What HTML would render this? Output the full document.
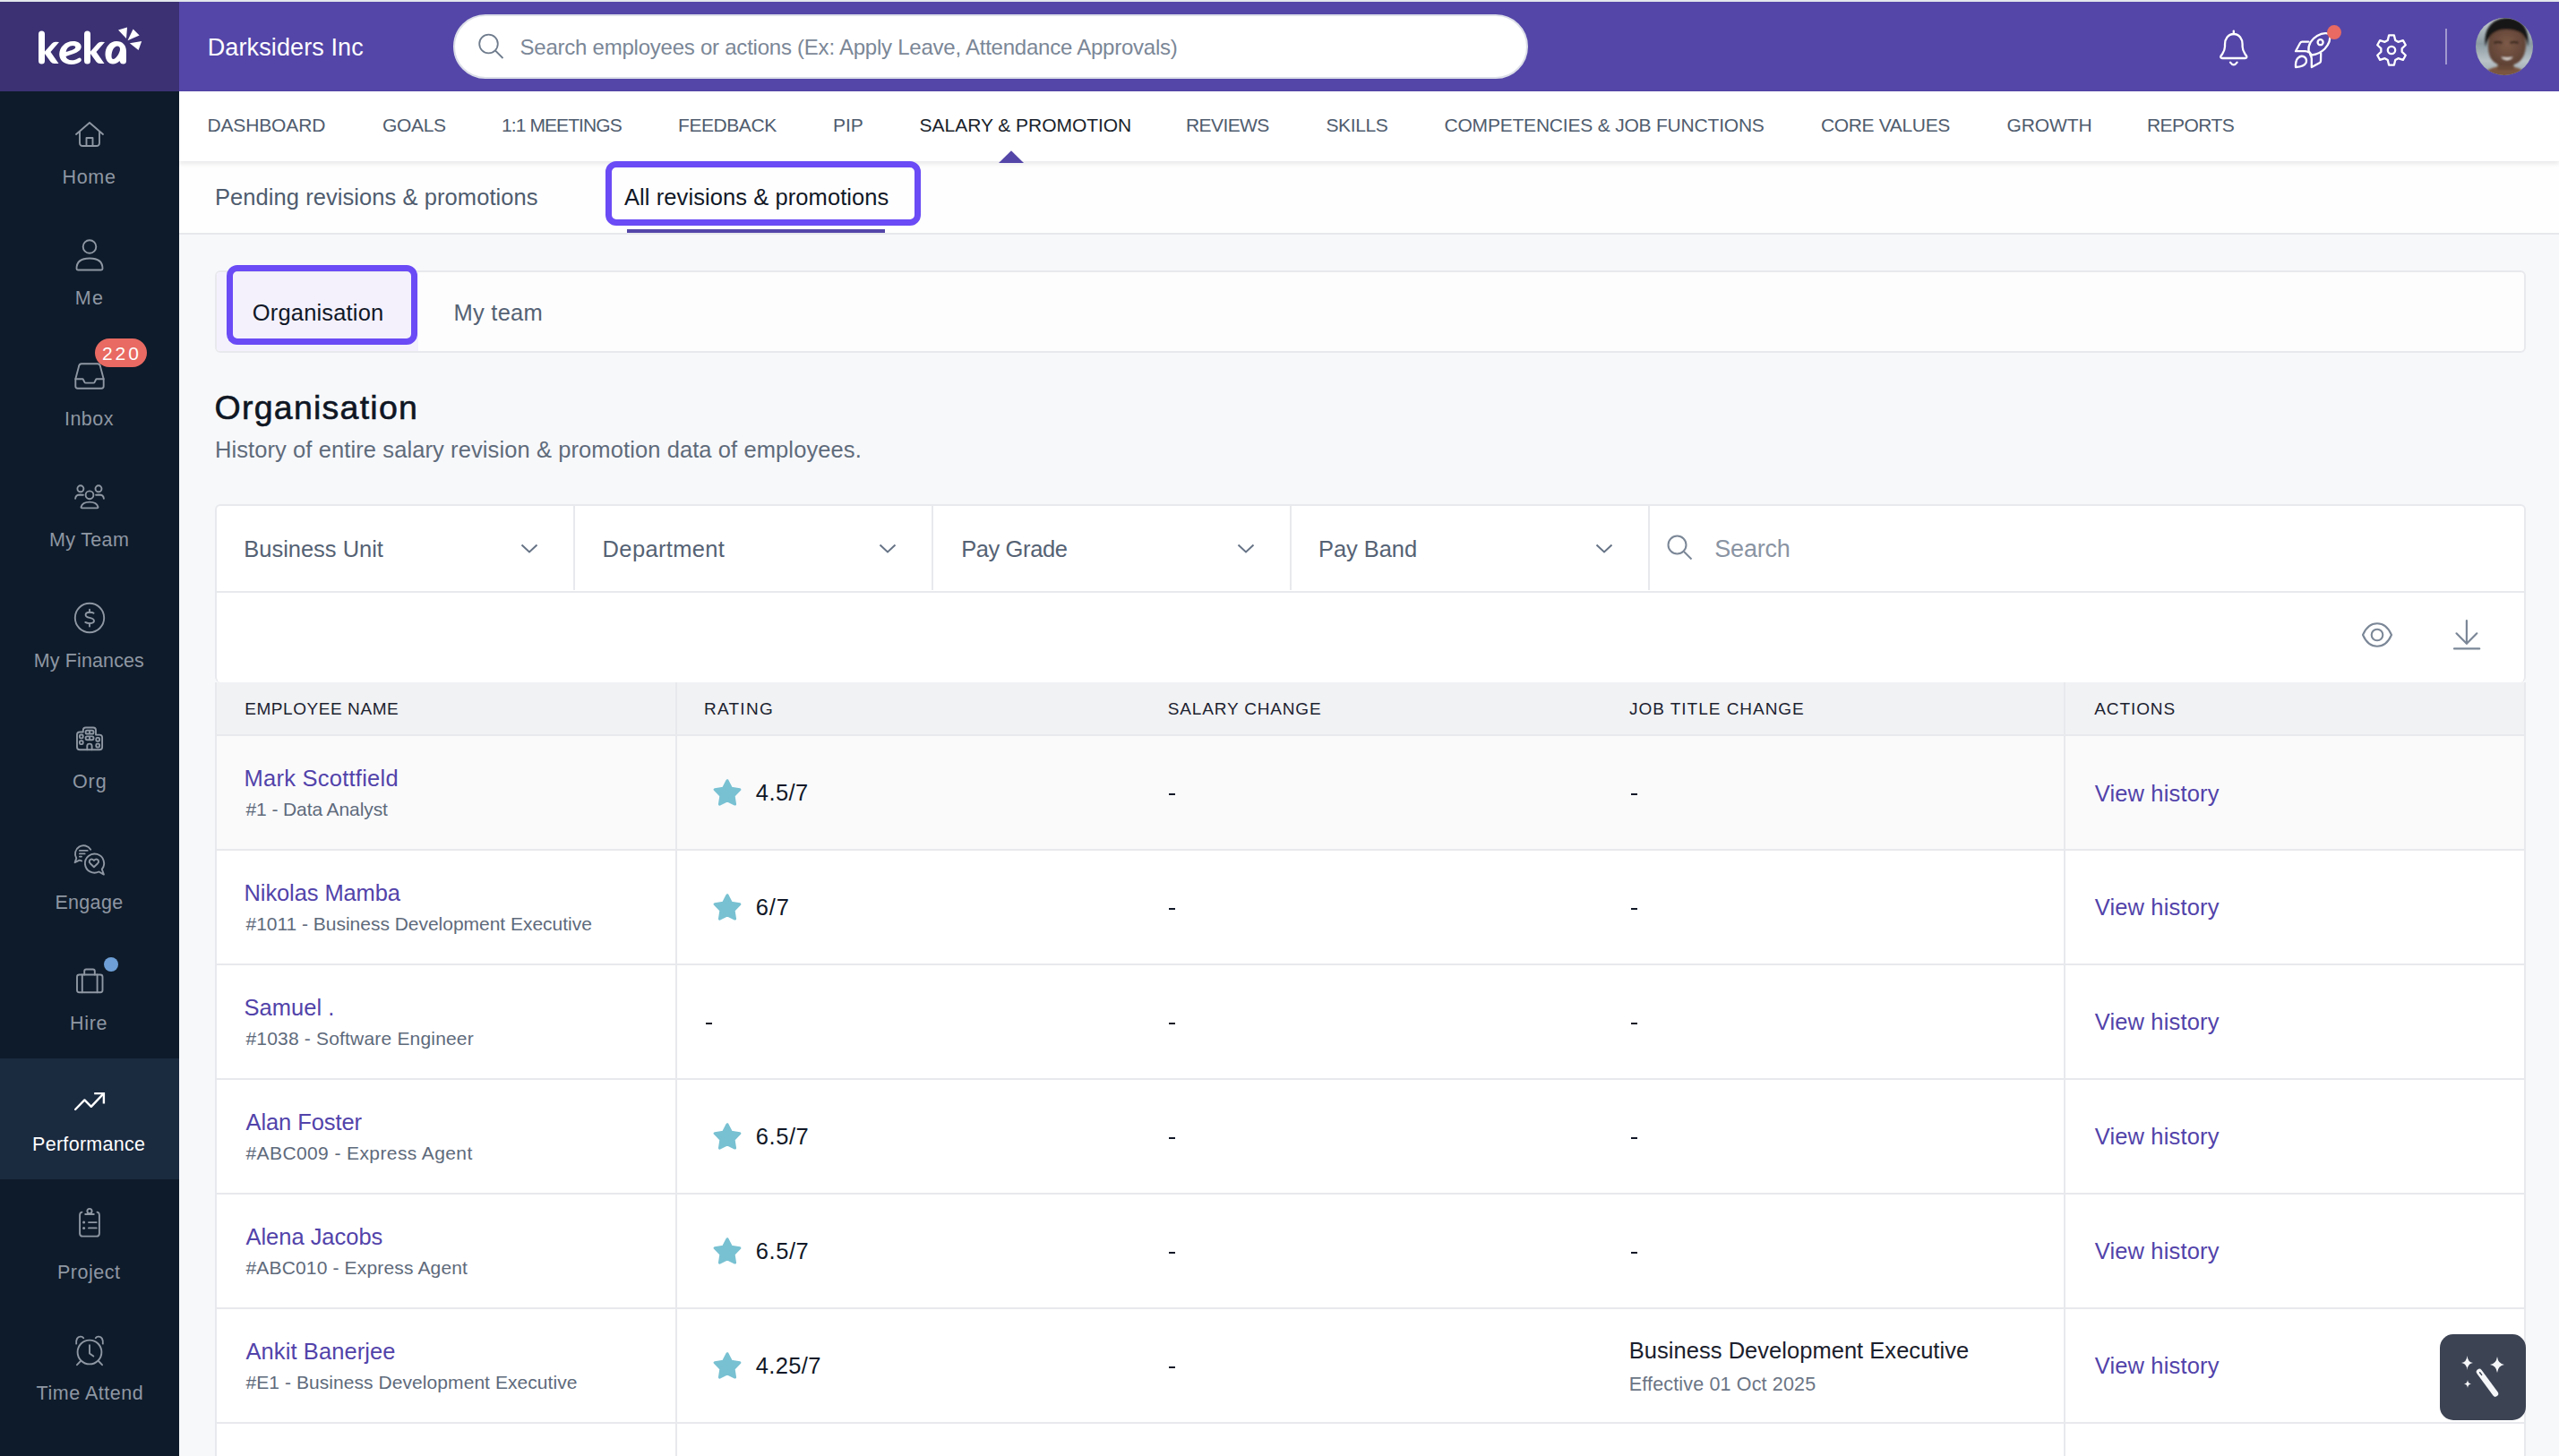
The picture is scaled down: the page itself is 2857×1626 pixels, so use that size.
<!DOCTYPE html>
<html><head><meta charset="utf-8"><title>Keka - Salary &amp; Promotion</title>
<style>
html,body{margin:0;padding:0;width:2857px;height:1626px;overflow:hidden;background:#f7f8fa}
body{position:relative;font-family:"Liberation Sans", sans-serif}
.t{position:absolute;white-space:nowrap;line-height:1;font-family:"Liberation Sans", sans-serif}
.r{position:absolute;display:block}
</style></head><body>
<div class="r" style="left:0px;top:0px;width:2857px;height:1626px;background:#f7f8fa;"></div>
<div class="r" style="left:0px;top:0px;width:2857px;height:2px;background:#e3e8ec;"></div>
<div class="r" style="left:0px;top:2px;width:200px;height:100px;background:#3b3173;"></div>
<div class="r" style="left:200px;top:2px;width:2657px;height:100px;background:#5446a8;"></div>
<div class="r" style="left:0px;top:102px;width:200px;height:1524px;background:#0e1b2a;"></div>
<div class="r" style="left:0px;top:1182px;width:200px;height:135px;background:#1a2a3f;"></div>
<svg class="r" style="left:36px;top:26px;" width="128" height="56" viewBox="0 0 128 56">
<g fill="#fff" transform="translate(0,3.5)">
<path d="M7 8.5 Q7 5 10.5 5 Q14 5 14 8.5 L14 28 L22 19 Q23.5 17.3 26 17.3 L30 17.5 L20.5 28.5 L29.5 41.5 L24.5 41.5 Q22 41.5 20.5 39.5 L14 30.5 L14 38.5 Q14 42 10.5 42 Q7 42 7 38.5 Z"/>
<g transform="translate(-1.3,0)"><path d="M47 16.5 C38 16.5 31.5 23.5 31.5 31 C31.5 37.5 36.5 42.5 45 42.5 C49.5 42.5 53 41 55.5 39 Q56.8 37.5 55.6 35.8 Q54.5 34.3 52.8 35.5 C50.5 37 48 37.8 45.5 37.8 C41.8 37.8 39.3 36 38.8 33.5 L43 32 C52 29.5 56 26.5 56 22.8 C56 19.2 52.5 16.5 47 16.5 Z M39 28.5 C39.5 24.5 42.5 21.5 46.5 21.5 C48.5 21.5 49.5 22.3 49.5 23.3 C49.5 25 46.5 26.7 39 28.5 Z"/></g>
<path d="M58 8.5 Q58 5 61.5 5 Q65 5 65 8.5 L65 28 L73 19 Q74.5 17.3 77 17.3 L81 17.5 L71.5 28.5 L80.5 41.5 L75.5 41.5 Q73 41.5 71.5 39.5 L65 30.5 L65 38.5 Q65 42 61.5 42 Q58 42 58 38.5 Z"/>
<path d="M94 16.5 C86.5 16.5 81.5 23.5 81.5 31 C81.5 37.5 85 42 90 42 C93 42 95.5 40.5 97.5 38.5 L97.8 39.5 Q98.5 42 101.5 42 Q105 42 105 38.5 L105 28 C105 21 101 16.5 94 16.5 Z M88.5 33.5 C88.5 27 91.5 22 95 22 C97 22 98 23.5 98 25.5 C98 30 93 36.5 90.5 36.5 C89 36.5 88.5 35 88.5 33.5 Z"/>
</g>
<g fill="#fff">
<path d="M96 7.5 L106 4.5 L105 17 Z"/>
<path d="M106.5 19.3 L112.6 6.4 L119.6 13.6 Z"/>
<path d="M108.8 22.2 L122.2 20 L118.6 30 Z"/>
</g></svg>
<div class="t" style="left:231.70px;top:40.00px;font-size:27px;color:#ffffff;font-weight:400;letter-spacing:0.115px;">Darksiders Inc</div>
<div class="r" style="left:506px;top:16px;width:1200px;height:72px;background:#ffffff;border-radius:36px;box-sizing:border-box;border:2px solid #dcdfe8;"></div>
<svg class="r" style="left:530px;top:34px;" width="36" height="36" viewBox="0 0 36 36"><circle cx="15.5" cy="15" r="10.3" fill="none" stroke="#6f7c8d" stroke-width="1.8"/><line x1="23" y1="22.5" x2="31.5" y2="31" stroke="#6f7c8d" stroke-width="1.8"/></svg>
<div class="t" style="left:580.50px;top:41.00px;font-size:24px;color:#7b8797;font-weight:400;letter-spacing:-0.235px;">Search employees or actions (Ex: Apply Leave, Attendance Approvals)</div>
<svg class="r" style="left:2465px;top:25px;" width="60" height="60" viewBox="0 0 60 60"><g fill="none" stroke="#fff" stroke-width="2.3" stroke-linejoin="round" stroke-linecap="round">
<path d="M28.8 13 C22.5 13 19 18.5 19 24.5 L19 27 C19 30.5 18 32.5 16 35.5 L14.5 37.5 Q13.5 39.8 16 40 L41.6 40 Q44.1 39.8 43.1 37.5 L41.6 35.5 C39.6 32.5 38.6 30.5 38.6 27 L38.6 24.5 C38.6 18.5 35.1 13 28.8 13 Z"/>
<path d="M28.8 9.6 L28.8 13"/>
<path d="M25 44.6 Q28.8 50 32.6 44.6"/></g></svg>
<svg class="r" style="left:2550px;top:25px;" width="70" height="60" viewBox="0 0 70 60"><g fill="none" stroke="#fff" stroke-width="2.3" stroke-linejoin="round" stroke-linecap="round">
<path d="M27.5 32 C26.5 25 31 18.5 37 15 C42 12 47.5 11.8 50.8 13 C52 17.5 50.5 24 45.5 29.5 C41.5 33.5 36 35.8 31 36.5 C29.5 35 28.5 33.5 27.5 32 Z"/>
<circle cx="40.6" cy="22.2" r="3"/>
<path d="M27.3 21.6 L20.3 21.6 Q18.8 21.6 18 23 L13 32.2 L23.5 32.2 Q26 32.4 27.6 33.4"/>
<path d="M41.2 34.6 L41 43 Q41 44.6 39.6 45.3 L30.8 50 L30.8 40.5 Q30.6 37.8 29.2 35.8"/>
<path d="M13 50 Q12.6 43 15.5 39.8 Q19 36.5 22.6 38.5 Q26 41 24.6 45 Q22.5 49.5 13 50 Z"/>
</g>
<circle cx="56" cy="11.1" r="8" fill="#e86a62"/></svg>
<svg class="r" style="left:2640px;top:25px;" width="60" height="60" viewBox="0 0 60 60"><g fill="none" stroke="#fff" stroke-width="2.3" stroke-linejoin="round">
<path d="M25.77 19.98 L27.08 14.46 L32.92 14.46 L34.23 19.98 L37.43 21.83 L42.87 20.20 L45.79 25.25 L41.65 29.15 L41.65 32.85 L45.79 36.75 L42.87 41.80 L37.43 40.17 L34.23 42.02 L32.92 47.54 L27.08 47.54 L25.77 42.02 L22.57 40.17 L17.13 41.80 L14.21 36.75 L18.35 32.85 L18.35 29.15 L14.21 25.25 L17.13 20.20 L22.57 21.83 Z"/>
<circle cx="30" cy="31" r="4.2"/></g></svg>
<div class="r" style="left:2730px;top:32px;width:2px;height:40px;background:rgba(255,255,255,0.45);"></div>
<svg class="r" style="left:2764px;top:20px;" width="64" height="64" viewBox="0 0 64 64"><defs><clipPath id="av"><circle cx="32" cy="32" r="32"/></clipPath>
<filter id="avb" x="-10%" y="-10%" width="120%" height="120%"><feGaussianBlur stdDeviation="0.9"/></filter>
<linearGradient id="bgav" x1="0" y1="0" x2="0" y2="1"><stop offset="0" stop-color="#c9d0d3"/><stop offset="0.45" stop-color="#8c9ba2"/><stop offset="0.75" stop-color="#b9c3c8"/><stop offset="1" stop-color="#9aa6ab"/></linearGradient>
<radialGradient id="face" cx="50%" cy="45%" r="55%"><stop offset="0" stop-color="#7d5a48"/><stop offset="1" stop-color="#5e4134"/></radialGradient></defs>
<g clip-path="url(#av)">
<rect width="64" height="64" fill="url(#bgav)"/>
<g filter="url(#avb)">
<path d="M8 66 C10 57 20 54 33 54 C46 54 55 57 58 66 Z" fill="#7a5540"/>
<path d="M25 48 L42 48 L43 58 L24 58 Z" fill="#684838"/>
<path d="M14 29 C13 46 21 53.5 34 53.5 C47 53.5 56 46 56 29 C56 16 48 9 35 9 C22 9 14 16 14 29 Z" fill="url(#face)"/>
<path d="M11 32 C8 12 19 0 35 0 C51 0 61 12 58 32 C57 23 53 17 47 15 C39 12 29 12 23 15 C16 18 13 24 11 32 Z" fill="#151314"/>
<path d="M20.5 28 Q25 26 29.5 28" stroke="#2b1c16" stroke-width="2.2" fill="none"/>
<path d="M38.5 28 Q43 26 47.5 28" stroke="#2b1c16" stroke-width="2.2" fill="none"/>
<path d="M28 43.5 Q35 50.5 42 43.5 Q35 45.5 28 43.5 Z" fill="#ece6e2"/>
</g>
</g></svg>
<div class="t" style="left:69.40px;top:188.00px;font-size:21.5px;color:#8e97a3;font-weight:400;letter-spacing:0.733px;">Home</div>
<div class="t" style="left:83.70px;top:323.00px;font-size:21.5px;color:#8e97a3;font-weight:400;letter-spacing:1.300px;">Me</div>
<div class="t" style="left:72.00px;top:458.00px;font-size:21.5px;color:#8e97a3;font-weight:400;letter-spacing:0.450px;">Inbox</div>
<div class="t" style="left:55.00px;top:593.00px;font-size:21.5px;color:#8e97a3;font-weight:400;letter-spacing:0.333px;">My Team</div>
<div class="t" style="left:37.80px;top:728.00px;font-size:21.5px;color:#8e97a3;font-weight:400;letter-spacing:0.120px;">My Finances</div>
<div class="t" style="left:81.00px;top:863.00px;font-size:21.5px;color:#8e97a3;font-weight:400;letter-spacing:0.900px;">Org</div>
<div class="t" style="left:61.40px;top:998.00px;font-size:21.5px;color:#8e97a3;font-weight:400;letter-spacing:0.320px;">Engage</div>
<div class="t" style="left:78.00px;top:1133.00px;font-size:21.5px;color:#8e97a3;font-weight:400;letter-spacing:0.667px;">Hire</div>
<div class="t" style="left:36.00px;top:1268.00px;font-size:21.5px;color:#ffffff;font-weight:400;letter-spacing:0.300px;">Performance</div>
<div class="t" style="left:64.00px;top:1411.00px;font-size:21.5px;color:#8e97a3;font-weight:400;letter-spacing:0.500px;">Project</div>
<div class="t" style="left:40.60px;top:1546.00px;font-size:21.5px;color:#8e97a3;font-weight:400;letter-spacing:0.510px;">Time Attend</div>
<svg class="r" style="left:80px;top:132px;" width="40" height="36" viewBox="0 0 40 36"><g fill="none" stroke="#8e97a3" stroke-width="1.9" stroke-linecap="round" stroke-linejoin="round"><path d="M5 18 L20 5 L35 18"/><path d="M9 15 L9 27.5 Q9 31 12.5 31 L27.5 31 Q31 31 31 27.5 L31 15"/><path d="M16.5 31 L16.5 22 L23.5 22 L23.5 31"/></g></svg>
<svg class="r" style="left:80px;top:264px;" width="40" height="42" viewBox="0 0 40 42"><g fill="none" stroke="#8e97a3" stroke-width="1.9" stroke-linecap="round" stroke-linejoin="round"><circle cx="20" cy="11.5" r="7.3"/><path d="M5.5 36 Q5.5 24.5 20 24.5 Q34.5 24.5 34.5 36 Q34.5 37.5 33 37.5 L7 37.5 Q5.5 37.5 5.5 36 Z"/></g></svg>
<svg class="r" style="left:80px;top:401px;" width="40" height="38" viewBox="0 0 40 38"><g fill="none" stroke="#8e97a3" stroke-width="1.9" stroke-linecap="round" stroke-linejoin="round"><path d="M4.3 22.2 L8.2 7.6 Q8.7 5.3 11 5.3 L29 5.3 Q31.3 5.3 31.8 7.6 L35.7 22.2"/><path d="M4.3 22.2 L4.3 30.3 Q4.3 32.8 6.8 32.8 L33.2 32.8 Q35.7 32.8 35.7 30.3 L35.7 22.2 L28 22.2 Q27.3 22.2 27 23 L25.6 25.8 Q25.2 26.6 24.4 26.6 L15.6 26.6 Q14.8 26.6 14.4 25.8 L13 23 Q12.7 22.2 12 22.2 Z"/></g></svg>
<svg class="r" style="left:80px;top:537px;" width="40" height="36" viewBox="0 0 40 36"><g fill="none" stroke="#8e97a3" stroke-width="1.9" stroke-linecap="round" stroke-linejoin="round"><circle cx="20" cy="15.8" r="4.4"/><path d="M11.5 30.4 Q10.3 30.4 10.6 29 Q12 23.6 20 23.6 Q28 23.6 29.4 29 Q29.7 30.4 28.5 30.4 Z"/><circle cx="9.9" cy="8.8" r="3.5"/><circle cx="30" cy="8.8" r="3.5"/><path d="M4.1 19.8 Q4.4 15.5 9.5 15.5 L12.9 15.7"/><path d="M35.9 19.8 Q35.6 15.5 30.5 15.5 L27.1 15.7"/></g></svg>
<svg class="r" style="left:80px;top:669px;" width="40" height="42" viewBox="0 0 40 42"><g fill="none" stroke="#8e97a3" stroke-width="1.9" stroke-linecap="round" stroke-linejoin="round"><circle cx="20" cy="21" r="16.2"/><path d="M24.6 15.7 Q23.4 14.7 20 14.7 Q15.6 14.7 15.6 17.7 Q15.6 19.9 20 20.9 Q25 22 25 24.3 Q25 27.1 20.2 27.1 Q17 27.1 15.3 25.9"/><line x1="20" y1="11.7" x2="20" y2="14.7"/><line x1="20" y1="27.1" x2="20" y2="30.5"/></g></svg>
<svg class="r" style="left:80px;top:807px;" width="40" height="36" viewBox="0 0 40 36"><g fill="none" stroke="#8e97a3" stroke-width="1.9" stroke-linecap="round" stroke-linejoin="round"><path d="M6 27.3 L6 13.5 Q6 10.5 9 10.5 L12.8 10.5 L12.8 8.5 Q12.8 5.5 15.8 5.5 L24 5.5 Q27 5.5 27 8.5 L27 13.6 L31.1 13.6 Q34.1 13.6 34.1 16.6 L34.1 27.3 Q34.1 30.3 31.1 30.3 L9 30.3 Q6 30.3 6 27.3 Z"/><path d="M17.3 30.3 L17.3 26 Q17.3 23.6 19.95 23.6 Q22.6 23.6 22.6 26 L22.6 30.3"/><rect x="15.6" y="8.7" width="8.9" height="3.8" rx="1.6"/><line x1="20.05" y1="9.5" x2="20.05" y2="11.7"/><rect x="15.6" y="15.4" width="8.9" height="3.8" rx="1.6"/><line x1="20.05" y1="16.2" x2="20.05" y2="18.4"/><rect x="8.9" y="13.5" width="3.8" height="3.9" rx="1.3"/><rect x="8.9" y="20.2" width="3.8" height="3.9" rx="1.3"/><rect x="27.3" y="16.9" width="3.8" height="3.9" rx="1.3"/><rect x="27.3" y="23.6" width="3.8" height="3.9" rx="1.3"/></g></svg>
<svg class="r" style="left:78px;top:939px;" width="44" height="44" viewBox="0 0 44 44"><g fill="none" stroke="#8e97a3" stroke-width="1.9" stroke-linecap="round" stroke-linejoin="round"><path d="M23.2 9.7 A9.2 9.2 0 1 0 7.3 19.4 L5.6 24.2 L10.7 21.6 L13.1 22.4"/><line x1="10.9" y1="10.9" x2="19.7" y2="10.9"/><line x1="10.9" y1="14.4" x2="16.6" y2="14.4"/><line x1="10.9" y1="17.6" x2="13" y2="17.6"/><path d="M35.8 31.7 A10.6 10.6 0 1 0 32.4 34.5 L37.9 37.6 Z"/><path d="M26.9 29.3 L22.7 25.2 Q21.1 23.5 22 21.9 Q23.4 19.9 25.5 20.8 Q26.4 21.2 26.9 22 Q27.4 21.2 28.3 20.8 Q30.4 19.9 31.8 21.9 Q32.7 23.5 31.1 25.2 Z"/></g></svg>
<svg class="r" style="left:80px;top:1077px;" width="40" height="36" viewBox="0 0 40 36"><g fill="none" stroke="#8e97a3" stroke-width="1.9" stroke-linecap="round" stroke-linejoin="round"><rect x="6" y="11.5" width="28.5" height="19.8" rx="2.5"/><path d="M14.2 11.5 L14.2 7.5 Q14.2 5.5 16.2 5.5 L23.8 5.5 Q25.8 5.5 25.8 7.5 L25.8 11.5"/><line x1="11.8" y1="11.5" x2="11.8" y2="31.3"/><line x1="28.6" y1="11.5" x2="28.6" y2="31.3"/></g></svg>
<div class="r" style="left:116px;top:1069px;width:16px;height:16px;border-radius:50%;background:#6e9fd6"></div>
<svg class="r" style="left:80px;top:1214px;" width="40" height="30" viewBox="0 0 40 30"><g fill="none" stroke="#fff" stroke-width="2.4" stroke-linecap="round" stroke-linejoin="round"><path d="M4.1 25 L14.4 14.4 L21.8 21.8 L35.3 7.7"/><path d="M25.2 7.1 L35.9 7.1 L35.9 18.5" stroke-linecap="butt" stroke-linejoin="miter"/></g></svg>
<svg class="r" style="left:80px;top:1344px;" width="40" height="42" viewBox="0 0 40 42"><g fill="none" stroke="#8e97a3" stroke-width="1.9" stroke-linecap="round" stroke-linejoin="round"><path d="M11.5 9.6 Q9.1 10 9.1 13 L9.1 33.4 Q9.1 36.6 12.3 36.6 L27.7 36.6 Q30.9 36.6 30.9 33.4 L30.9 13 Q30.9 10 28.5 9.6"/><circle cx="20" cy="8.5" r="2.6"/><line x1="15.2" y1="12" x2="24.8" y2="12"/><line x1="19" y1="21.1" x2="27.7" y2="21.1"/><line x1="19" y1="27.4" x2="27.7" y2="27.4"/></g><circle cx="13.6" cy="21.1" r="1.5" fill="#8e97a3"/><circle cx="13.6" cy="27.4" r="1.5" fill="#8e97a3"/></svg>
<svg class="r" style="left:80px;top:1487px;" width="40" height="42" viewBox="0 0 40 42"><g fill="none" stroke="#8e97a3" stroke-width="1.9" stroke-linecap="round" stroke-linejoin="round"><circle cx="20" cy="23" r="13.4"/><path d="M20 15.3 L20 24.4 L24.3 27.6"/><path d="M5.2 13.6 Q4.6 6.2 9.8 5.6 Q12 5.4 13.2 7.2"/><path d="M34.8 13.6 Q35.4 6.2 30.2 5.6 Q28 5.4 26.8 7.2"/><line x1="10" y1="33" x2="6" y2="37.2"/><line x1="30" y1="33" x2="34" y2="37.2"/></g></svg>
<div class="r" style="left:106px;top:378px;width:58px;height:32px;border-radius:16px;background:#e86a62"></div>
<div class="t" style="left:113.90px;top:384.00px;font-size:21px;color:#ffffff;font-weight:400;letter-spacing:3.000px;">220</div>
<div class="r" style="left:200px;top:102px;width:2657px;height:78px;background:#ffffff;box-shadow:0 3px 5px rgba(20,25,40,0.09);z-index:2"></div>
<div class="t" style="left:231.40px;top:129.00px;font-size:21px;color:#4f5c6e;font-weight:400;letter-spacing:-0.125px;z-index:3">DASHBOARD</div>
<div class="t" style="left:427.00px;top:129.00px;font-size:21px;color:#4f5c6e;font-weight:400;letter-spacing:-0.350px;z-index:3">GOALS</div>
<div class="t" style="left:560.00px;top:129.00px;font-size:21px;color:#4f5c6e;font-weight:400;letter-spacing:-0.909px;z-index:3">1:1 MEETINGS</div>
<div class="t" style="left:757.00px;top:129.00px;font-size:21px;color:#4f5c6e;font-weight:400;letter-spacing:-0.429px;z-index:3">FEEDBACK</div>
<div class="t" style="left:930.00px;top:129.00px;font-size:21px;color:#4f5c6e;font-weight:400;letter-spacing:0.000px;z-index:3">PIP</div>
<div class="t" style="left:1026.60px;top:129.00px;font-size:21px;color:#1a1f2b;font-weight:400;letter-spacing:-0.035px;z-index:3">SALARY &amp; PROMOTION</div>
<div class="t" style="left:1324.00px;top:129.00px;font-size:21px;color:#4f5c6e;font-weight:400;letter-spacing:-0.583px;z-index:3">REVIEWS</div>
<div class="t" style="left:1480.50px;top:129.00px;font-size:21px;color:#4f5c6e;font-weight:400;letter-spacing:-0.400px;z-index:3">SKILLS</div>
<div class="t" style="left:1612.50px;top:129.00px;font-size:21px;color:#4f5c6e;font-weight:400;letter-spacing:-0.204px;z-index:3">COMPETENCIES &amp; JOB FUNCTIONS</div>
<div class="t" style="left:2033.00px;top:129.00px;font-size:21px;color:#4f5c6e;font-weight:400;letter-spacing:-0.350px;z-index:3">CORE VALUES</div>
<div class="t" style="left:2240.50px;top:129.00px;font-size:21px;color:#4f5c6e;font-weight:400;letter-spacing:-0.100px;z-index:3">GROWTH</div>
<div class="t" style="left:2397.00px;top:129.00px;font-size:21px;color:#4f5c6e;font-weight:400;letter-spacing:-0.583px;z-index:3">REPORTS</div>
<svg class="r" style="left:1115px;top:168px;z-index:3" width="28" height="14" viewBox="0 0 28 14"><path d="M0 14 L14 0.2 L28 14 Z" fill="#5446a8"/></svg>
<div class="r" style="left:200px;top:180px;width:2657px;height:82px;background:#fefefe;"></div>
<div class="r" style="left:200px;top:260px;width:2657px;height:2px;background:#e6e8eb;"></div>
<div class="t" style="left:239.90px;top:208.00px;font-size:25.5px;color:#4f5c6e;font-weight:400;letter-spacing:0.072px;">Pending revisions &amp; promotions</div>
<div class="t" style="left:697.00px;top:208.00px;font-size:25.5px;color:#111827;font-weight:400;letter-spacing:0.080px;">All revisions &amp; promotions</div>
<div class="r" style="left:700px;top:256px;width:288px;height:4px;background:#5446a8;"></div>
<div class="r" style="left:676px;top:180px;width:352px;height:72px;box-sizing:border-box;border:7px solid #6a4bf5;border-radius:12px;z-index:4"></div>
<div class="r" style="left:240px;top:302px;width:2580px;height:92px;box-sizing:border-box;border:2px solid #e8e9ed;border-radius:6px;background:#fdfdfd"></div>
<div class="r" style="left:242px;top:304px;width:225px;height:88px;background:#f4f1fd;border-radius:4px 0 0 4px"></div>
<div class="r" style="left:253px;top:296px;width:213px;height:89px;box-sizing:border-box;border:7px solid #6a4bf5;border-radius:12px"></div>
<div class="t" style="left:281.80px;top:337.00px;font-size:25.5px;color:#111827;font-weight:400;letter-spacing:0.164px;">Organisation</div>
<div class="t" style="left:506.50px;top:337.00px;font-size:25.5px;color:#556274;font-weight:400;letter-spacing:0.250px;">My team</div>
<div class="t" style="left:239.50px;top:437.00px;font-size:37.5px;color:#0f1623;font-weight:400;letter-spacing:1.255px;-webkit-text-stroke:0.6px #0f1623">Organisation</div>
<div class="t" style="left:239.90px;top:490.00px;font-size:25.5px;color:#5f6b7b;font-weight:400;letter-spacing:0.097px;">History of entire salary revision &amp; promotion data of employees.</div>
<div class="r" style="left:240px;top:563px;width:2580px;height:199px;box-sizing:border-box;border:2px solid #e8e9ed;border-bottom:none;border-radius:6px 6px 6px 6px;background:#ffffff"></div>
<div class="r" style="left:242px;top:660px;width:2576px;height:2px;background:#e8e9ed;"></div>
<div class="r" style="left:640px;top:565px;width:2px;height:94px;background:#e8e9ed;"></div>
<div class="r" style="left:1040px;top:565px;width:2px;height:94px;background:#e8e9ed;"></div>
<div class="r" style="left:1440px;top:565px;width:2px;height:94px;background:#e8e9ed;"></div>
<div class="r" style="left:1840px;top:565px;width:2px;height:94px;background:#e8e9ed;"></div>
<div class="t" style="left:272.30px;top:601.00px;font-size:25.5px;color:#556274;font-weight:400;letter-spacing:-0.025px;">Business Unit</div>
<div class="t" style="left:672.60px;top:601.00px;font-size:25.5px;color:#556274;font-weight:400;letter-spacing:0.344px;">Department</div>
<div class="t" style="left:1073.20px;top:601.00px;font-size:25.5px;color:#556274;font-weight:400;letter-spacing:-0.400px;">Pay Grade</div>
<div class="t" style="left:1472.00px;top:601.00px;font-size:25.5px;color:#556274;font-weight:400;letter-spacing:-0.071px;">Pay Band</div>
<svg class="r" style="left:580.5px;top:606.5px;" width="20" height="11" viewBox="0 0 20 11"><path d="M1.5 1.5 L10 9.5 L18.5 1.5" fill="none" stroke="#667386" stroke-width="2"/></svg>
<svg class="r" style="left:980.5px;top:606.5px;" width="20" height="11" viewBox="0 0 20 11"><path d="M1.5 1.5 L10 9.5 L18.5 1.5" fill="none" stroke="#667386" stroke-width="2"/></svg>
<svg class="r" style="left:1380.5px;top:606.5px;" width="20" height="11" viewBox="0 0 20 11"><path d="M1.5 1.5 L10 9.5 L18.5 1.5" fill="none" stroke="#667386" stroke-width="2"/></svg>
<svg class="r" style="left:1780.5px;top:606.5px;" width="20" height="11" viewBox="0 0 20 11"><path d="M1.5 1.5 L10 9.5 L18.5 1.5" fill="none" stroke="#667386" stroke-width="2"/></svg>
<svg class="r" style="left:1858px;top:594px;" width="36" height="36" viewBox="0 0 36 36"><circle cx="14.5" cy="14.5" r="10" fill="none" stroke="#7b8797" stroke-width="2"/><line x1="22" y1="22" x2="30.5" y2="30.5" stroke="#7b8797" stroke-width="2"/></svg>
<div class="t" style="left:1914.30px;top:600.00px;font-size:27px;color:#8a94a3;font-weight:400;letter-spacing:-0.220px;">Search</div>
<svg class="r" style="left:2632px;top:690px;" width="44" height="38" viewBox="0 0 44 38"><g fill="none" stroke="#7b8797" stroke-width="2.1" stroke-linejoin="round"><path d="M6 19 C9.5 11 15 6.3 22 6.3 C29 6.3 34.5 11 38 19 C34.5 27 29 31.7 22 31.7 C15 31.7 9.5 27 6 19 Z"/><circle cx="22" cy="19" r="6.3"/></g></svg>
<svg class="r" style="left:2734px;top:688px;" width="40" height="42" viewBox="0 0 40 42"><g fill="none" stroke="#7b8797" stroke-width="2.2" stroke-linecap="round" stroke-linejoin="round"><line x1="19.9" y1="5" x2="19.9" y2="30.5"/><path d="M8.5 19.3 L19.9 30.7 L31.3 19.3"/><line x1="6" y1="36.4" x2="34.2" y2="36.4"/></g></svg>
<div class="r" style="left:240px;top:762px;width:2580px;height:60px;background:#f1f2f4;"></div>
<div class="t" style="left:273.20px;top:782.00px;font-size:19px;color:#1c2230;font-weight:400;letter-spacing:0.567px;">EMPLOYEE NAME</div>
<div class="t" style="left:786.00px;top:782.00px;font-size:19px;color:#1c2230;font-weight:400;letter-spacing:1.260px;">RATING</div>
<div class="t" style="left:1303.80px;top:782.00px;font-size:19px;color:#1c2230;font-weight:400;letter-spacing:0.833px;">SALARY CHANGE</div>
<div class="t" style="left:1819.00px;top:782.00px;font-size:19px;color:#1c2230;font-weight:400;letter-spacing:0.973px;">JOB TITLE CHANGE</div>
<div class="t" style="left:2338.30px;top:782.00px;font-size:19px;color:#1c2230;font-weight:400;letter-spacing:0.900px;">ACTIONS</div>
<div class="r" style="left:242px;top:822px;width:2576px;height:127px;background:#fafafb;"></div>
<div class="r" style="left:242px;top:948px;width:2576px;height:128px;background:#ffffff;"></div>
<div class="r" style="left:242px;top:1076px;width:2576px;height:128px;background:#ffffff;"></div>
<div class="r" style="left:242px;top:1204px;width:2576px;height:128px;background:#ffffff;"></div>
<div class="r" style="left:242px;top:1332px;width:2576px;height:128px;background:#ffffff;"></div>
<div class="r" style="left:242px;top:1460px;width:2576px;height:128px;background:#ffffff;"></div>
<div class="r" style="left:242px;top:1588px;width:2576px;height:40px;background:#ffffff;"></div>
<div class="r" style="left:242px;top:820px;width:2576px;height:2px;background:#e8e9ed;"></div>
<div class="r" style="left:242px;top:948px;width:2576px;height:2px;background:#e8e9ed;"></div>
<div class="r" style="left:242px;top:1076px;width:2576px;height:2px;background:#e8e9ed;"></div>
<div class="r" style="left:242px;top:1204px;width:2576px;height:2px;background:#e8e9ed;"></div>
<div class="r" style="left:242px;top:1332px;width:2576px;height:2px;background:#e8e9ed;"></div>
<div class="r" style="left:242px;top:1460px;width:2576px;height:2px;background:#e8e9ed;"></div>
<div class="r" style="left:242px;top:1588px;width:2576px;height:2px;background:#e8e9ed;"></div>
<div class="r" style="left:240px;top:762px;width:2px;height:864px;background:#e8e9ed;"></div>
<div class="r" style="left:2818px;top:762px;width:2px;height:864px;background:#e8e9ed;"></div>
<div class="r" style="left:754px;top:762px;width:2px;height:864px;background:#e8e9ed;"></div>
<div class="r" style="left:2304px;top:762px;width:2px;height:864px;background:#e8e9ed;"></div>
<div class="t" style="left:272.50px;top:857.00px;font-size:25.5px;color:#5243aa;font-weight:400;letter-spacing:0.250px;">Mark Scottfield</div>
<div class="t" style="left:274.50px;top:893.00px;font-size:21px;color:#5e6a7b;font-weight:400;letter-spacing:-0.094px;">#1 - Data Analyst</div>
<svg class="r" style="left:796px;top:870px;" width="32" height="32" viewBox="0 0 32 32"><path d="M16.00 1.70 L20.41 10.23 L29.89 11.79 L23.13 18.62 L24.58 28.11 L16.00 23.80 L7.42 28.11 L8.87 18.62 L2.11 11.79 L11.59 10.23 Z" fill="#78c1d2" stroke="#78c1d2" stroke-width="3" stroke-linejoin="round"/></svg>
<div class="t" style="left:843.80px;top:873.00px;font-size:25.5px;color:#111827;font-weight:400;letter-spacing:0.425px;">4.5/7</div>
<div class="r" style="left:1304.5px;top:886px;width:7px;height:2px;background:#111827"></div>
<div class="r" style="left:1820.5px;top:886px;width:7px;height:2px;background:#111827"></div>
<div class="t" style="left:2338.70px;top:874.00px;font-size:25.5px;color:#5243aa;font-weight:400;letter-spacing:0.155px;">View history</div>
<div class="t" style="left:272.50px;top:985.00px;font-size:25.5px;color:#5243aa;font-weight:400;letter-spacing:-0.100px;">Nikolas Mamba</div>
<div class="t" style="left:274.50px;top:1021.00px;font-size:21px;color:#5e6a7b;font-weight:400;letter-spacing:-0.022px;">#1011 - Business Development Executive</div>
<svg class="r" style="left:796px;top:998px;" width="32" height="32" viewBox="0 0 32 32"><path d="M16.00 1.70 L20.41 10.23 L29.89 11.79 L23.13 18.62 L24.58 28.11 L16.00 23.80 L7.42 28.11 L8.87 18.62 L2.11 11.79 L11.59 10.23 Z" fill="#78c1d2" stroke="#78c1d2" stroke-width="3" stroke-linejoin="round"/></svg>
<div class="t" style="left:843.80px;top:1001.00px;font-size:25.5px;color:#111827;font-weight:400;letter-spacing:0.800px;">6/7</div>
<div class="r" style="left:1304.5px;top:1014px;width:7px;height:2px;background:#111827"></div>
<div class="r" style="left:1820.5px;top:1014px;width:7px;height:2px;background:#111827"></div>
<div class="t" style="left:2338.70px;top:1001.00px;font-size:25.5px;color:#5243aa;font-weight:400;letter-spacing:0.155px;">View history</div>
<div class="t" style="left:272.50px;top:1113.00px;font-size:25.5px;color:#5243aa;font-weight:400;letter-spacing:0.043px;">Samuel .</div>
<div class="t" style="left:274.50px;top:1149.00px;font-size:21px;color:#5e6a7b;font-weight:400;letter-spacing:0.183px;">#1038 - Software Engineer</div>
<div class="r" style="left:788px;top:1142px;width:7px;height:2px;background:#111827"></div>
<div class="r" style="left:1304.5px;top:1142px;width:7px;height:2px;background:#111827"></div>
<div class="r" style="left:1820.5px;top:1142px;width:7px;height:2px;background:#111827"></div>
<div class="t" style="left:2338.70px;top:1129.00px;font-size:25.5px;color:#5243aa;font-weight:400;letter-spacing:0.155px;">View history</div>
<div class="t" style="left:274.50px;top:1241.00px;font-size:25.5px;color:#5243aa;font-weight:400;letter-spacing:-0.090px;">Alan Foster</div>
<div class="t" style="left:274.50px;top:1277.00px;font-size:21px;color:#5e6a7b;font-weight:400;letter-spacing:0.400px;">#ABC009 - Express Agent</div>
<svg class="r" style="left:796px;top:1254px;" width="32" height="32" viewBox="0 0 32 32"><path d="M16.00 1.70 L20.41 10.23 L29.89 11.79 L23.13 18.62 L24.58 28.11 L16.00 23.80 L7.42 28.11 L8.87 18.62 L2.11 11.79 L11.59 10.23 Z" fill="#78c1d2" stroke="#78c1d2" stroke-width="3" stroke-linejoin="round"/></svg>
<div class="t" style="left:843.80px;top:1257.00px;font-size:25.5px;color:#111827;font-weight:400;letter-spacing:0.550px;">6.5/7</div>
<div class="r" style="left:1304.5px;top:1270px;width:7px;height:2px;background:#111827"></div>
<div class="r" style="left:1820.5px;top:1270px;width:7px;height:2px;background:#111827"></div>
<div class="t" style="left:2338.70px;top:1257.00px;font-size:25.5px;color:#5243aa;font-weight:400;letter-spacing:0.155px;">View history</div>
<div class="t" style="left:274.50px;top:1369.00px;font-size:25.5px;color:#5243aa;font-weight:400;letter-spacing:-0.027px;">Alena Jacobs</div>
<div class="t" style="left:274.50px;top:1405.00px;font-size:21px;color:#5e6a7b;font-weight:400;letter-spacing:0.155px;">#ABC010 - Express Agent</div>
<svg class="r" style="left:796px;top:1382px;" width="32" height="32" viewBox="0 0 32 32"><path d="M16.00 1.70 L20.41 10.23 L29.89 11.79 L23.13 18.62 L24.58 28.11 L16.00 23.80 L7.42 28.11 L8.87 18.62 L2.11 11.79 L11.59 10.23 Z" fill="#78c1d2" stroke="#78c1d2" stroke-width="3" stroke-linejoin="round"/></svg>
<div class="t" style="left:843.80px;top:1385.00px;font-size:25.5px;color:#111827;font-weight:400;letter-spacing:0.550px;">6.5/7</div>
<div class="r" style="left:1304.5px;top:1398px;width:7px;height:2px;background:#111827"></div>
<div class="r" style="left:1820.5px;top:1398px;width:7px;height:2px;background:#111827"></div>
<div class="t" style="left:2338.70px;top:1385.00px;font-size:25.5px;color:#5243aa;font-weight:400;letter-spacing:0.155px;">View history</div>
<div class="t" style="left:274.50px;top:1497.00px;font-size:25.5px;color:#5243aa;font-weight:400;letter-spacing:0.092px;">Ankit Banerjee</div>
<div class="t" style="left:274.50px;top:1533.00px;font-size:21px;color:#5e6a7b;font-weight:400;letter-spacing:0.066px;">#E1 - Business Development Executive</div>
<svg class="r" style="left:796px;top:1510px;" width="32" height="32" viewBox="0 0 32 32"><path d="M16.00 1.70 L20.41 10.23 L29.89 11.79 L23.13 18.62 L24.58 28.11 L16.00 23.80 L7.42 28.11 L8.87 18.62 L2.11 11.79 L11.59 10.23 Z" fill="#78c1d2" stroke="#78c1d2" stroke-width="3" stroke-linejoin="round"/></svg>
<div class="t" style="left:843.80px;top:1513.00px;font-size:25.5px;color:#111827;font-weight:400;letter-spacing:0.340px;">4.25/7</div>
<div class="r" style="left:1304.5px;top:1526px;width:7px;height:2px;background:#111827"></div>
<div class="t" style="left:1818.80px;top:1496.00px;font-size:25.5px;color:#1a202c;font-weight:400;letter-spacing:0.031px;">Business Development Executive</div>
<div class="t" style="left:1818.80px;top:1536.00px;font-size:21.5px;color:#6b7585;font-weight:400;letter-spacing:0.160px;">Effective 01 Oct 2025</div>
<div class="t" style="left:2338.70px;top:1513.00px;font-size:25.5px;color:#5243aa;font-weight:400;letter-spacing:0.155px;">View history</div>
<div class="r" style="left:2724px;top:1490px;width:96px;height:96px;border-radius:15px;background:#3c4353;z-index:5"></div>
<svg class="r" style="left:2724px;top:1490px;z-index:6" width="96" height="96" viewBox="0 0 96 96"><g fill="#f5f6f8">
<path d="M30.5 24 Q31.1 31.2 37 32 Q31.1 32.8 30.5 40 Q29.9 32.8 24 32 Q29.9 31.2 30.5 24 Z"/>
<path d="M64 25 Q65 33 72 34 Q65 35 64 43 Q63 35 56 34 Q63 33 64 25 Z"/>
<path d="M31 51 Q31.4 55.1 35 55.5 Q31.4 55.9 31 60 Q30.6 55.9 27 55.5 Q30.6 55.1 31 51 Z"/>
</g>
<line x1="44" y1="42" x2="62" y2="66.5" stroke="#f5f6f8" stroke-width="6.4" stroke-linecap="round"/>
<line x1="44.6" y1="42.8" x2="46.6" y2="45.4" stroke="#3c4353" stroke-width="1.5" stroke-linecap="round"/></svg>
</body></html>
